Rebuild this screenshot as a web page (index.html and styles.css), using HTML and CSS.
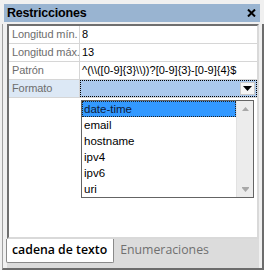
FILE: index.html
```html
<!DOCTYPE html>
<html>
<head>
<meta charset="utf-8">
<link rel="stylesheet" href="styles.css">
</head>
<body>
<div class="win">
  <div class="title"><span class="ttl">Restricciones</span><svg class="close" width="9" height="8" viewBox="0 0 9 8"><path d="M1 0.5L8 7.5M8 0.5L1 7.5" stroke="#000" stroke-width="2"/></svg></div>
  <div class="body">
    <div class="grid">
      <div class="row"><div class="lab">Longitud mín.</div><div class="val">8</div></div>
      <div class="row"><div class="lab">Longitud máx.</div><div class="val">13</div></div>
      <div class="row"><div class="lab">Patrón</div><div class="val">^(\\([0-9]{3}\\))?[0-9]{3}-[0-9]{4}$</div></div>
      <div class="row sel"><div class="lab">Formato</div><div class="val"><span class="btn"><svg width="9" height="5" viewBox="0 0 9 5"><path d="M0 0H9L4.5 5Z" fill="#000"/></svg></span></div></div>
    </div>
    <div class="tabs">
      <div class="tab active">cadena de texto</div>
      <div class="tab">Enumeraciones</div>
    </div>
  </div>
  <div class="dropdown">
    <div class="items">
      <div class="item hl">date-time</div>
      <div class="item">email</div>
      <div class="item">hostname</div>
      <div class="item">ipv4</div>
      <div class="item">ipv6</div>
      <div class="item">uri</div>
    </div>
    <div class="sb">
      <svg width="7" height="4" viewBox="0 0 7 4"><path d="M0 4H7L3.5 0Z" fill="#a8a8a8"/></svg>
      <svg width="7" height="5" viewBox="0 0 7 5"><path d="M0 0.5H7" stroke="#a8a8a8"/><path d="M0 1H7L3.5 5Z" fill="#a8a8a8"/></svg>
    </div>
  </div>
</div>
</body>
</html>
```

FILE: styles.css
```css
* { box-sizing: border-box; }
html, body { margin: 0; padding: 0; }
body { background: #f0f0f0; width: 264px; height: 270px; overflow: hidden; }
.win {
  position: relative;
  width: 264px;
  height: 270px;
  background: #f0f0f0;
  font-family: "Liberation Sans", Arial, sans-serif;
  font-size: 11px;
  color: #000;
}
.title {
  margin: 4px 4px 0 4px;
  height: 18px;
  background: #99b4d1;
  display: flex;
  align-items: center;
  justify-content: space-between;
  padding: 0 4px 0 3px;
}
.ttl { font-weight: bold; font-size: 12.5px; letter-spacing: -0.2px; }
.close { display: block; }
.body {
  margin: 2px 0 0 2px;
  height: 246px;
  border-left: 1px solid #a0a0a0;
  border-right: 2px solid #6c6c6c;
  border-bottom: 2px solid #6c6c6c;
  padding: 0 3px 0 4px;
  display: flex;
  flex-direction: column;
}
.grid {
  height: 215px;
  background: #fff;
  border-top: 2px solid #6f6f6f;
  border-left: 2px solid #6f6f6f;
  border-right: 2px solid #d9d9d9;
  border-bottom: 2px solid #d9d9d9;
}
.row {
  display: flex;
  height: 18px;
  border-bottom: 1px solid #d6d6d6;
  line-height: 17px;
}
.lab {
  width: 71px;
  padding-left: 3px;
  color: #6d6d6d;
  border-right: 1px solid #d6d6d6;
  white-space: nowrap;
  letter-spacing: -0.1px;
}
.val {
  flex: 1;
  padding-left: 2px;
  white-space: nowrap;
  overflow: hidden;
}
.sel .lab { background: #dce8f5; }
.sel .val {
  background: #abc9ed;
  border: 1px dotted #000;
  display: flex;
  justify-content: flex-end;
  align-items: center;
  padding: 0 1px;
}
.btn {
  width: 15px;
  height: 13px;
  background: #f4f4f4;
  border: 1px solid #c8c8c8;
  display: flex;
  align-items: center;
  justify-content: center;
}
.tabs {
  flex: 1;
  background: #dcdcdc;
  display: flex;
  align-items: flex-start;
}
.tab {
  height: 24px;
  line-height: 22px;
  padding: 0 6px;
  font-family: "Open Sans", "Noto Sans", sans-serif;
  font-size: 12.3px;
  color: #707070;
}
.tab.active {
  margin-left: -1px;
  background: #fff;
  color: #000;
  font-weight: 600;
  border: 1px solid #8a8a8a;
  border-top: none;
  border-radius: 0 0 2px 2px;
  padding: 0 6px 0 5px;
}
.dropdown {
  position: absolute;
  left: 81px;
  top: 96px;
  width: 173px;
  height: 98px;
  background: #fff;
  border: 1px solid #646464;
  display: flex;
}
.items { flex: 1; }
.item {
  height: 16px;
  line-height: 16px;
  padding-left: 2px;
  font-size: 11.5px;
  color: #000;
}
.item.hl { background: #3399ff; border: 1px dotted #222; line-height: 14px; padding-left: 1px; color: #0c1a3a; }
.sb {
  width: 17px;
  background: #ececec;
  border-left: 1px solid #e2e2e2;
  display: flex;
  flex-direction: column;
  justify-content: space-between;
  align-items: center;
  padding: 6px 0 5px;
}
```
